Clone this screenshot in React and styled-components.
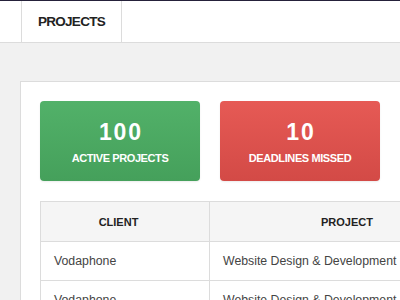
import React from "react";
import styled, { createGlobalStyle } from "styled-components";

const Global = createGlobalStyle`
  html, body { margin: 0; padding: 0; overflow: hidden; background: #f1f1f1; }
  body { font-family: "Liberation Sans", Arial, sans-serif; }
  * { box-sizing: border-box; }
`;

const Page = styled.div`
  width: 400px;
  height: 300px;
  overflow: hidden;
  background: #f1f1f1;
`;

const Header = styled.header`
  height: 43px;
  background: #fff;
  border-top: 1px solid #25213a;
  border-bottom: 1px solid #dcdcdc;
  display: flex;
  padding-left: 21px;
`;

const Tab = styled.div`
  width: 101px;
  border-left: 1px solid #dcdcdc;
  border-right: 1px solid #dcdcdc;
  display: flex;
  align-items: center;
  justify-content: center;
  font-family: "Liberation Sans Narrow", "Liberation Sans", Arial, sans-serif;
  font-weight: 700;
  font-size: 13.5px;
  letter-spacing: -0.7px;
  color: #222;
  padding-bottom: 1px;
`;

const Main = styled.main`
  padding: 38px 0 0 20px;
`;

const Card = styled.section`
  width: 760px;
  background: #fff;
  border: 1px solid #dcdcdc;
  padding: 19px;
  display: flex;
  flex-direction: column;
  gap: 20px;
`;

const Stats = styled.div`
  display: flex;
  gap: 20px;
`;

const Stat = styled.div`
  width: 160px;
  height: 80px;
  border-radius: 4px;
  background: ${(p) =>
    p.$tone === "green"
      ? "linear-gradient(#52b169, #45a05b)"
      : "linear-gradient(#e65a55, #d34a46)"};
  box-shadow: 0 1px 2px rgba(0, 0, 0, 0.08);
  color: #fff;
  display: flex;
  flex-direction: column;
  align-items: center;
  justify-content: center;
  padding-top: 2px;
`;

const Value = styled.div`
  font-weight: 700;
  font-size: 23px;
  letter-spacing: 1.8px;
  margin-right: -1.8px;
  line-height: 22px;
`;

const Label = styled.div`
  font-weight: 700;
  font-size: 11px;
  letter-spacing: -0.4px;
  margin-top: 9px;
  line-height: 12px;
`;

const Table = styled.table`
  border-collapse: collapse;
  width: 720px;
  table-layout: fixed;
`;

const Th = styled.th`
  height: 40px;
  background: #f5f5f5;
  border: 1px solid #dcdcdc;
  font-weight: 700;
  font-size: 11px;
  color: #222;
  text-align: center;
  padding: 0 26px 0 13px;
  width: ${(p) => p.$w}px;
`;

const Td = styled.td`
  height: 39px;
  border: 1px solid #dcdcdc;
  font-size: 12.3px;
  color: #444;
  padding: 0 13px;
  white-space: nowrap;
  overflow: hidden;
`;

const rows = [
  ["Vodaphone", "Website Design & Development"],
  ["Vodaphone", "Website Design & Development"],
  ["Vodaphone", "Website Design & Development"],
];

export default function App() {
  return (
    <Page>
      <Global />
      <Header>
        <Tab>PROJECTS</Tab>
      </Header>
      <Main>
        <Card>
          <Stats>
            <Stat $tone="green">
              <Value>100</Value>
              <Label>ACTIVE PROJECTS</Label>
            </Stat>
            <Stat $tone="red">
              <Value>10</Value>
              <Label>DEADLINES MISSED</Label>
            </Stat>
          </Stats>
          <Table>
            <thead>
              <tr>
                <Th $w={169}>CLIENT</Th>
                <Th $w={288}>PROJECT</Th>
                <Th>STATUS</Th>
              </tr>
            </thead>
            <tbody>
              {rows.map((r, i) => (
                <tr key={i}>
                  <Td>{r[0]}</Td>
                  <Td>{r[1]}</Td>
                  <Td>In Progress</Td>
                </tr>
              ))}
            </tbody>
          </Table>
        </Card>
      </Main>
    </Page>
  );
}
